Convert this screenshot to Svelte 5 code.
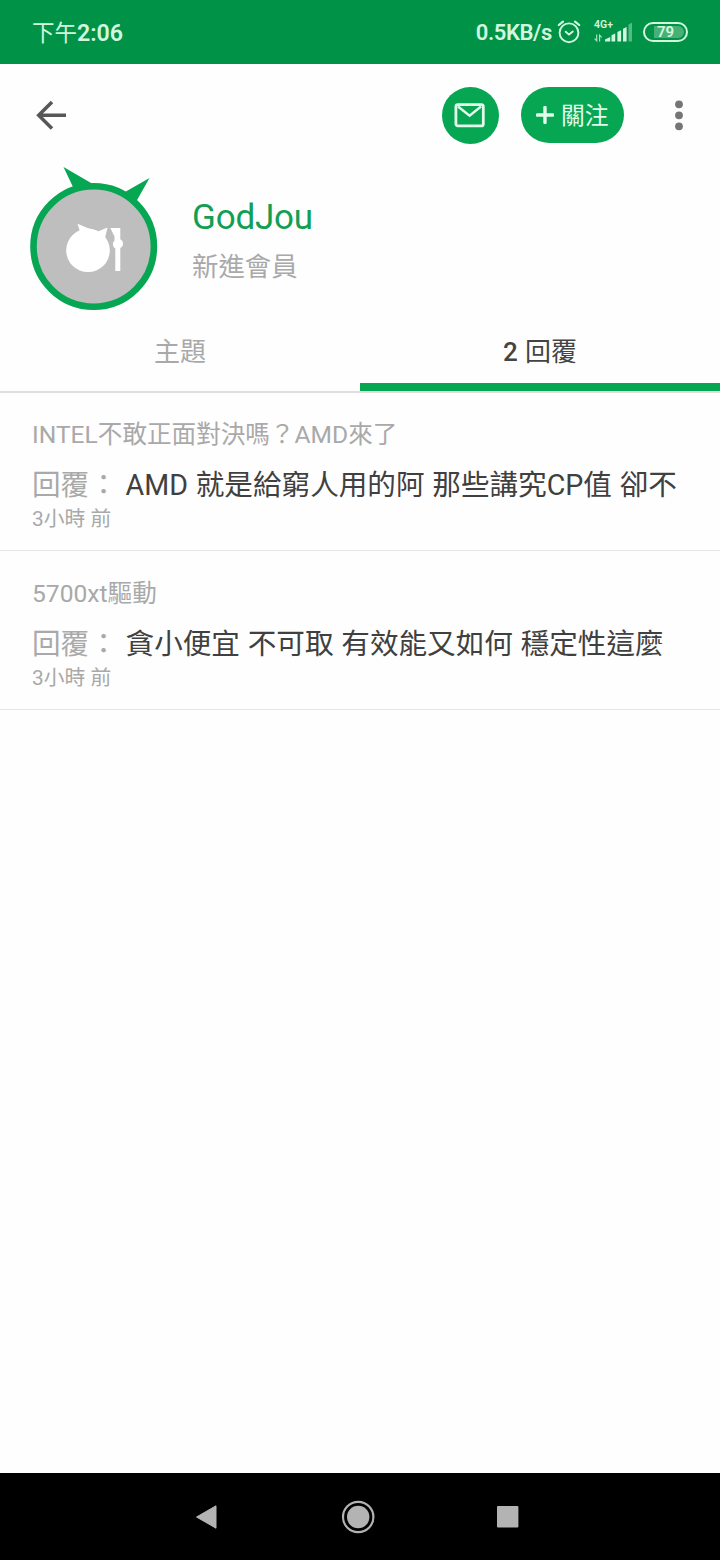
<script>
	const replies = [
		{
			title: 'INTEL不敢正面對決嗎？AMD來了',
			text: 'AMD 就是給窮人用的阿 那些講究CP值 卻不',
			time: '3小時 前'
		},
		{
			title: '5700xt驅動',
			text: '貪小便宜 不可取 有效能又如何 穩定性這麼',
			time: '3小時 前'
		}
	];

	let activeTab = $state('replies');
</script>

<main>
	<div class="status">
		<div class="clock"><span>下午</span>2:06</div>
		<div class="status-right">
			<span class="speed">0.5KB/s</span>
			<svg class="alarm" width="24" height="24" viewBox="0 0 24 24">
				<g fill="none" stroke="#d2f7de" stroke-width="1.9" stroke-linecap="round">
					<circle cx="12" cy="12.8" r="9.4" />
					<path d="M8.7 11.7 12 14.6l3.8-3" />
					<path d="M1.8 5 6 1.6M22.2 5 18 1.6" stroke-width="2.2" />
				</g>
			</svg>
			<div class="signal">
				<span class="network">4G+</span>
				<svg width="39" height="22" viewBox="0 0 39 22">
					<g fill="#d2f7de">
						<path d="M11 20.5v-2l5.2-2.6v4.6zM17.5 20.5v-6.3l3.7-1.8v8.1zM23.4 20.5V11l3.7-1.8v11.3zM29 20.5V7.7l3.6-1.8v14.6z" />
						<path d="M34.5 20.5V3.6l3.5-1.8v18.7z" opacity=".4" />
						<path d="M2.7 13.5v6.3L.6 17.6M5.6 20.5v-6.3l2.1 2.2" fill="none" stroke="#d2f7de" stroke-width="1.2" opacity=".8" />
					</g>
				</svg>
			</div>
			<div class="battery"><div class="level"></div><span>79</span></div>
		</div>
	</div>

	<header>
		<button class="back" aria-label="back">
			<svg width="32" height="32" viewBox="0 0 32 32">
				<path d="M31 16.3H4M17 3 3.7 16.3 17 29.6" fill="none" stroke="#575757" stroke-width="3.5" />
			</svg>
		</button>
		<button class="mail" aria-label="mail">
			<svg width="32" height="26" viewBox="0 0 32 26">
				<rect x="1.9" y="2.7" width="27.4" height="21.2" rx="2" fill="none" stroke="#e2fbea" stroke-width="2.8" />
				<path d="M4 4.5 15.6 13.8 27 4.5" fill="none" stroke="#e2fbea" stroke-width="2.4" />
			</svg>
		</button>
		<button class="follow">
			<svg width="18" height="18" viewBox="0 0 18 18">
				<path d="M9 1.4v15.2M1.4 9h15.2" stroke="#e2fbea" stroke-width="3.4" stroke-linecap="round" />
			</svg>
			<span>關注</span>
		</button>
		<button class="more" aria-label="more">
			<svg width="10" height="32" viewBox="0 0 10 32">
				<g fill="#757575">
					<circle cx="5" cy="5.3" r="3.9" />
					<circle cx="5" cy="16.3" r="3.9" />
					<circle cx="5" cy="27.3" r="3.9" />
				</g>
			</svg>
		</button>
	</header>

	<section class="profile">
		<svg width="130" height="146" viewBox="0 0 130 146">
			<path d="M33.5 1 62 17.5 43 21ZM119.5 12 95 26l11.5 9Z" fill="#06a653" />
			<circle cx="63.7" cy="80.5" r="60.2" fill="#bebebe" stroke="#06a653" stroke-width="6.6" />
			<g fill="#fff">
				<circle cx="58" cy="84.3" r="21.8" />
				<path d="M47.5 57.8 50.5 67 60 63ZM77.5 61.5 68 65.5l7 6.5Z" />
				<path d="M80.3 62H90.3V73.3A5 5 0 0 1 90.3 82.3V105H85.3V82.5A5 5 0 0 1 84.5 74.5V70.5Z" />
			</g>
		</svg>
		<div class="info">
			<div class="name">GodJou</div>
			<div class="level-name">新進會員</div>
		</div>
	</section>

	<nav>
		<button class:active={activeTab === 'topics'} onclick={() => (activeTab = 'topics')}>主題</button>
		<button class:active={activeTab === 'replies'} onclick={() => (activeTab = 'replies')}>
			<b>2</b> 回覆
		</button>
	</nav>

	<div class="list">
		{#each replies as reply}
			<article>
				<div class="title">{reply.title}</div>
				<div class="text"><span>回覆：</span> {reply.text}</div>
				<div class="time">{reply.time}</div>
			</article>
		{/each}
	</div>

	<footer>
		<svg width="24" height="26" viewBox="0 0 24 26">
			<path d="M1.5 13 21 1.8v22.4Z" fill="#b3b3b3" stroke="#b3b3b3" stroke-linejoin="round" />
		</svg>
		<svg width="34" height="34" viewBox="0 0 34 34">
			<circle cx="17.2" cy="17" r="15.2" fill="none" stroke="#b3b3b3" stroke-width="2.2" />
			<circle cx="17.2" cy="17" r="11.2" fill="#b3b3b3" />
		</svg>
		<svg width="22" height="22" viewBox="0 0 22 22">
			<rect width="21.4" height="21.4" rx="1" fill="#b3b3b3" />
		</svg>
	</footer>
</main>

<style>
	:global(body) {
		margin: 0;
	}
	main {
		display: flex;
		flex-direction: column;
		width: 720px;
		height: 1560px;
		background: #fefefe;
		font-family: Roboto, 'Noto Sans CJK TC', sans-serif;
		overflow: hidden;
	}
	svg {
		display: block;
		flex: none;
	}
	button {
		padding: 0;
		border: none;
		background: none;
		font: inherit;
		cursor: pointer;
	}

	.status {
		display: flex;
		justify-content: space-between;
		align-items: center;
		height: 64px;
		padding: 0 32px;
		box-sizing: border-box;
		background: #009348;
		color: #d2f7de;
	}
	.clock {
		padding-top: 1px;
		font-size: 23.2px;
		line-height: 30px;
		font-weight: 600;
		white-space: nowrap;
	}
	.clock span {
		font-size: 22.5px;
		font-weight: 400;
	}
	.status-right {
		display: flex;
		align-items: center;
	}
	.speed {
		padding-top: 2px;
		font-size: 22px;
		line-height: 30px;
		font-weight: 600;
		letter-spacing: -0.4px;
	}
	.alarm {
		margin: 0 13px 0 5px;
	}
	.signal {
		position: relative;
		width: 39px;
		height: 22px;
		margin-right: 10px;
	}
	.network {
		position: absolute;
		left: 0;
		top: -2px;
		font-size: 10.5px;
		line-height: 12px;
		font-weight: 600;
	}
	.battery {
		position: relative;
		width: 45px;
		height: 20px;
		box-sizing: border-box;
		border: 2px solid #d2f7de;
		border-radius: 10px;
		font-size: 15px;
		line-height: 17px;
		font-weight: 600;
		text-align: center;
	}
	.level {
		position: absolute;
		inset: 2px 2px 2px 9px;
		border-radius: 0 7px 7px 0;
		background: #45b177;
	}
	.battery span {
		position: relative;
	}

	header {
		display: flex;
		align-items: center;
		height: 102px;
		padding: 0 36px 0 35px;
	}
	.back {
		margin-right: auto;
	}
	.mail {
		display: grid;
		place-items: center;
		width: 57px;
		height: 57px;
		border-radius: 50%;
		background: #06a653;
	}
	.follow {
		display: flex;
		align-items: center;
		gap: 7px;
		width: 103px;
		height: 56px;
		margin: 0 50px 0 22.5px;
		padding-left: 15px;
		box-sizing: border-box;
		border-radius: 28px;
		background: #06a653;
		color: #e2fbea;
		font-size: 23.8px;
		line-height: 32px;
		white-space: nowrap;
	}
	.follow span {
		padding-top: 2px;
	}

	.profile {
		display: flex;
		gap: 32px;
		height: 146px;
		padding-left: 30px;
	}
	.name {
		margin-top: 31px;
		color: #119f54;
		font-size: 35px;
		line-height: 42px;
		letter-spacing: -0.2px;
	}
	.level-name {
		margin-top: 10px;
		color: #a9a9a9;
		font-size: 26.4px;
		line-height: 36px;
	}

	nav {
		display: flex;
		height: 81px;
		box-sizing: border-box;
		border-bottom: 2px solid #dfdfdf;
	}
	nav button {
		flex: 1;
		height: 79px;
		box-sizing: border-box;
		border-bottom: 8px solid transparent;
		padding-top: 8px;
		color: #a9a9a9;
		font-size: 26px;
		line-height: 36px;
	}
	nav button.active {
		border-bottom-color: #06a653;
		color: #444;
	}
	nav b {
		margin-right: 1px;
		font-weight: 500;
	}

	article {
		padding: 26px 32px 19px;
		border-bottom: 1px solid #e6e6e6;
		color: #a9a9a9;
		white-space: nowrap;
	}
	article + article {
		padding-top: 27px;
	}
	.title {
		font-size: 24.6px;
		line-height: 31px;
	}
	.text {
		margin-top: 15px;
		color: #404040;
		font-size: 28.6px;
		line-height: 41px;
		word-spacing: 0.7px;
	}
	.text span {
		color: #a9a9a9;
	}
	.time {
		margin-top: 1px;
		font-size: 20.8px;
		line-height: 24px;
	}

	footer {
		display: flex;
		align-items: center;
		justify-content: space-between;
		height: 87px;
		margin-top: auto;
		padding: 0 201px 0 195px;
		background: #000;
	}
</style>
